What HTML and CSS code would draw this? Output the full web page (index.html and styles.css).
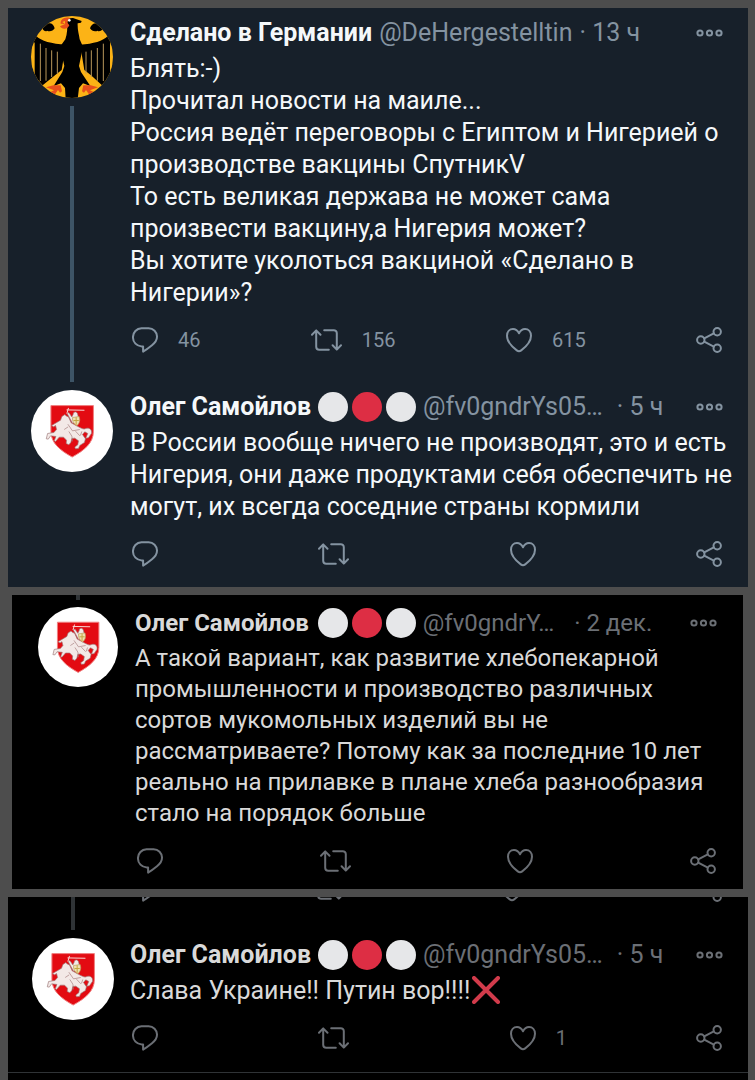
FILE: index.html
```
<!DOCTYPE html>
<html lang="ru">
<head>
    <meta charset="UTF-8">
    <meta name="viewport" content="width=device-width, initial-scale=1">
    <title>Твиты</title>
    <link rel="stylesheet" href="styles.css">
</head>
<body>
<!-- icons -->
<svg class="sprite" aria-hidden="true">
    <symbol id="reply" viewBox="0 0 26 28">
        <path d="M9.500 2.200h7a8.400 8.400 0 0 1 8.500 8.600c0 3.600-1.900 6-5 8.500-2.900 2.400-5.400 4.300-8.900 6.300v-5.200H9.700A8.800 8.800 0 0 1 1 11.300a8.800 8.800 0 0 1 8.500-9.100z"/>
    </symbol>
    <symbol id="retweet" viewBox="0 0 31 28">
        <path d="M5.200 4.500v16.300a3 3 0 0 0 3 3h9.600M1 8.700l4.200-4.300 4.300 4.300M13.200 4.200h9.600a3 3 0 0 1 3 3v16.300M21.600 19.300l4.200 4.300 4.200-4.300"/>
    </symbol>
    <symbol id="heart" viewBox="0 0 26 28">
        <path d="M13 7.300C11.500 4.300 9.300 3 7 3 3.500 3 1 5.800 1 9.700c0 6 5 11 9.800 14.700 1.600 1.200 2.800 1.200 4.400 0C20 20.700 25 15.700 25 9.700 25 5.800 22.500 3 19 3c-2.300 0-4.500 1.300-6 4.300z"/>
    </symbol>
    <symbol id="share" viewBox="0 0 26 28">
        <circle cx="4.800" cy="14" r="3.700"/>
        <circle cx="21.200" cy="5.700" r="3.700"/>
        <circle cx="21.200" cy="22.300" r="3.700"/>
        <path d="M8.200 12.300l9.600-4.900M8.200 15.700l9.600 4.900"/>
    </symbol>
    <symbol id="more" viewBox="0 0 27 8">
        <circle cx="4" cy="4" r="2.600"/>
        <circle cx="13.500" cy="4" r="2.600"/>
        <circle cx="23" cy="4" r="2.600"/>
    </symbol>
    <symbol id="cross" viewBox="0 0 28 28">
        <path d="M2 2l24 24M26 2L2 26"/>
    </symbol>
    <symbol id="eagle" viewBox="3 3 246 246">
        <path fill="#fcb316" d="M0 0h252v252H0z"/>
        <!-- wings -->
        <path d="M18 62c16 16 46 24 90 27l-5 28-8 48-20 16-37 30-28-30V80zM234 62c-16 16-42 24-84 27l5 28 8 48 20 16 33 30 28-30V80z"/>
        <path d="M38 42c2-10 12-18 22-17 8 1 12 8 14 15-5 9-16 11-23 7-3 4-9 1-13-5zM218 42c-2-10-12-18-22-17-8 1-14 8-16 15 5 9 16 11 23 7 3 4 11 1 15-5z"/>
        <path fill="#fcb316" d="M6 90l8-8v108l-8-12zM246 90l-6-8v108l6-12zM96 170l8-42 6 38-6 16zM158 170l-9-42-6 38 6 16z"/>
        <path fill="none" stroke="#b9975b" stroke-width="3" d="M31 86v112M48 99v98M65 106v80M82 110v66M220 86v112M202 99v98M184 106v80M168 110v66"/>
        <!-- body and tail -->
        <path d="M112 24c-1-11 7-16 17-15l26 9-2 5-10 2c-1 20 4 32 6 48l10 22-12 58 6 18 28 42-22-8-12 14-4 33h-36l-2-33-12-14-22 8 26-42 6-18-13-58 16-22c6-18 6-34 6-49z"/>
        <path fill="#e8501c" d="M120 9c-16-5-30 5-28 17l13 1-15 7c4 10 23 11 28-3l-6-8c0-6 3-10 8-14z"/>
        <path fill="#fcb316" d="M97 21l8-3v9z"/>
        <path fill="#e8501c" d="M70 211l22 0 4 18-6 4-6-8-10 14-24-3 22-10-24-9zM182 211l-22 0-4 18 6 4 6-8 10 14 24-3-22-10 24-9z"/>
        <circle cx="118" cy="16" r="4" fill="#fff"/>
    </symbol>
    <symbol id="pahonia" viewBox="17 15 247 247">
        <path fill="#fff" d="M0 0h300v300H0z"/>
        <path fill="#e30b12" stroke="#f08080" stroke-width="3" d="M77 62h128v78c0 35-28 57-64 77-36-20-64-42-64-77z"/>
        <path fill="#f3e9e7" stroke="#9b7676" stroke-width="2" d="M106 106l4-11 9-6 4 4 7 3 8 18 26 14c8 4 13 6 18 3 10-4 20 3 17 15l-9 13-8 1 6-14-9-5-7 8 9 13-3 11-14 9-4 9-9 1-2-5 9-7 2-12-11-8-9 1-3 12-6 7-8-4 1-10-9-9-13 0-11 13-4-2 5-13-16-2-7 10-6-1 4-16 19-3 8-9-3-12-6 4-6-4z"/>
        <path fill="#f3e9e7" stroke="#9b7676" stroke-width="2" d="M144 88c0-8 10-10 13-2l3 12-4 14-14 3-7-13-9-16 5-3 9 13z"/>
        <path fill="none" stroke="#f8d9d6" stroke-width="3" d="M124 75l54 1M125 86l5-17"/>
        <path fill="#f0dfb0" stroke="#b79c57" stroke-width="2" d="M142 98l20-3c4 12 1 21-7 28-9-5-14-13-13-25z"/>
        <path fill="none" stroke="#c2a63e" stroke-width="3" d="M153 97v23M145 107h16"/>
        <path fill="none" stroke="#a47b7b" stroke-width="2" d="M128 118l14 20 22-4M131 140l9 14 2 16M151 139l13 14M117 134l12-8M170 140l-4 12"/>
    </symbol>
</svg>

<main class="feed">
    <section class="panel dim">
        <article class="tweet">
            <div class="side">
                <svg class="avatar" role="img" aria-label="Сделано в Германии"><use href="#eagle"/></svg>
                <span class="thread"></span>
            </div>
            <div class="content">
                <header>
                    <a href="#" class="name">Сделано в Германии</a>
                    <a href="#" class="handle">@DeHergestelltin</a>
                    <span class="time">· 13 ч</span>
                    <button type="button" class="more" aria-label="Ещё"><svg><use href="#more"/></svg></button>
                </header>
                <p>Блять:-)<br>Прочитал новости на маиле...<br>Россия ведёт переговоры с Египтом и Нигерией о<br>производстве вакцины СпутникV<br>То есть великая держава не может сама<br>произвести вакцину,а Нигерия может?<br>Вы хотите уколоться вакциной «Сделано в<br>Нигерии»?</p>
                <div class="actions">
                    <button type="button" aria-label="Ответить, 46"><svg><use href="#reply"/></svg><span>46</span></button>
                    <button type="button" aria-label="Ретвитнуть, 156"><svg class="wide"><use href="#retweet"/></svg><span>156</span></button>
                    <button type="button" aria-label="Нравится, 615"><svg><use href="#heart"/></svg><span>615</span></button>
                    <button type="button" aria-label="Поделиться"><svg><use href="#share"/></svg></button>
                </div>
            </div>
        </article>
        <article class="tweet last">
            <div class="side">
                <svg class="avatar" role="img" aria-label="Олег Самойлов"><use href="#pahonia"/></svg>
            </div>
            <div class="content">
                <header>
                    <a href="#" class="name">Олег Самойлов</a>
                    <span class="balls"><i></i><i class="red"></i><i></i></span>
                    <a href="#" class="handle">@fv0gndrYs05…</a>
                    <span class="time cut">· 5 ч</span>
                    <button type="button" class="more" aria-label="Ещё"><svg><use href="#more"/></svg></button>
                </header>
                <p>В России вообще ничего не производят, это и есть<br>Нигерия, они даже продуктами себя обеспечить не<br>могут, их всегда соседние страны кормили</p>
                <div class="actions">
                    <button type="button" aria-label="Ответить"><svg><use href="#reply"/></svg></button>
                    <button type="button" aria-label="Ретвитнуть"><svg class="wide"><use href="#retweet"/></svg></button>
                    <button type="button" aria-label="Нравится"><svg><use href="#heart"/></svg></button>
                    <button type="button" aria-label="Поделиться"><svg><use href="#share"/></svg></button>
                </div>
            </div>
        </article>
    </section>

    <section class="panel dark small">
        <div class="stub"><span class="thread"></span></div>
        <article class="tweet last">
            <div class="side">
                <svg class="avatar" role="img" aria-label="Олег Самойлов"><use href="#pahonia"/></svg>
            </div>
            <div class="content">
                <header>
                    <a href="#" class="name">Олег Самойлов</a>
                    <span class="balls"><i></i><i class="red"></i><i></i></span>
                    <a href="#" class="handle">@fv0gndrY…</a>
                    <span class="time cut">· 2 дек.</span>
                    <button type="button" class="more" aria-label="Ещё"><svg><use href="#more"/></svg></button>
                </header>
                <p>А такой вариант, как развитие хлебопекарной<br>промышленности и производство различных<br>сортов мукомольных изделий вы не<br>рассматриваете? Потому как за последние 10 лет<br>реально на прилавке в плане хлеба разнообразия<br>стало на порядок больше</p>
                <div class="actions">
                    <button type="button" aria-label="Ответить"><svg><use href="#reply"/></svg></button>
                    <button type="button" aria-label="Ретвитнуть"><svg class="wide"><use href="#retweet"/></svg></button>
                    <button type="button" aria-label="Нравится"><svg><use href="#heart"/></svg></button>
                    <button type="button" aria-label="Поделиться"><svg><use href="#share"/></svg></button>
                </div>
            </div>
        </article>
    </section>

    <section class="panel dark bottom">
        <!-- tail of the previous tweet -->
        <div class="tweet peek">
            <div class="side"><span class="thread"></span></div>
            <div class="content">
                <div class="actions">
                    <button type="button" aria-label="Ответить"><svg><use href="#reply"/></svg></button>
                    <button type="button" aria-label="Ретвитнуть"><svg class="wide"><use href="#retweet"/></svg></button>
                    <button type="button" class="liked" aria-label="Нравится"><svg><use href="#heart"/></svg></button>
                    <button type="button" aria-label="Поделиться"><svg><use href="#share"/></svg></button>
                </div>
            </div>
        </div>
        <article class="tweet last">
            <div class="side">
                <svg class="avatar" role="img" aria-label="Олег Самойлов"><use href="#pahonia"/></svg>
            </div>
            <div class="content">
                <header>
                    <a href="#" class="name">Олег Самойлов</a>
                    <span class="balls"><i></i><i class="red"></i><i></i></span>
                    <a href="#" class="handle">@fv0gndrYs05…</a>
                    <span class="time cut">· 5 ч</span>
                    <button type="button" class="more" aria-label="Ещё"><svg><use href="#more"/></svg></button>
                </header>
                <p>Слава Украине!! Путин вор!!!!<svg class="cross" role="img" aria-label="крестик"><use href="#cross"/></svg></p>
                <div class="actions">
                    <button type="button" aria-label="Ответить"><svg><use href="#reply"/></svg></button>
                    <button type="button" aria-label="Ретвитнуть"><svg class="wide"><use href="#retweet"/></svg></button>
                    <button type="button" class="single" aria-label="Нравится, 1"><svg><use href="#heart"/></svg><span>1</span></button>
                    <button type="button" aria-label="Поделиться"><svg><use href="#share"/></svg></button>
                </div>
            </div>
        </article>
    </section>
</main>
</body>
</html>
```
FILE: styles.css
```
*{margin:0;padding:0;box-sizing:border-box;}

body{background:#4d4d4d;font-family:Roboto,"Noto Sans",sans-serif;font-size:25px;line-height:32px;}
a{text-decoration:none;color:inherit;}
button{border:0;background:none;font:inherit;color:inherit;cursor:pointer;}
.sprite{position:absolute;width:0;height:0;}

.feed{display:flex;flex-direction:column;gap:8px;padding:8px 7px 0 8px;}
.panel{overflow:hidden;}
.dim{background:#17202a;color:#f5f8fa;--muted:#8493a1;--line:#3d5466;}
.dark{background:#000;color:#d9d9d9;--muted:#6b6f75;--line:#2f3336;}
.small{margin:0 5px 0 4px;font-size:24px;line-height:31px;}

.tweet{display:flex;gap:17px;padding:8px 25px 0 23px;}
.side{display:flex;flex-direction:column;align-items:center;flex:none;width:82px;}
.avatar{display:block;width:82px;height:82px;border-radius:50%;}
.thread{flex:1;width:4px;margin-top:8px;background:var(--line);}
.content{flex:1;min-width:0;padding-bottom:28px;}
.last .content{padding-bottom:19px;}

header{display:flex;align-items:center;height:34px;margin-bottom:3px;white-space:nowrap;}
.name{font-weight:700;}
.handle{margin-left:7px;color:var(--muted);}
.time{margin-left:7px;color:var(--muted);}
.time.cut{margin-left:14px;}
.more{margin-left:auto;height:8px;line-height:0;color:var(--muted);}
.more svg{width:27px;height:8px;fill:none;stroke:currentColor;stroke-width:2;}

.balls{display:flex;gap:4px;margin-left:7px;}
.balls i{width:30px;height:30px;border-radius:50%;background:#e6e7e9;}
.balls .red{background:#dd2e44;}

p{white-space:nowrap;}
.cross{width:28px;height:28px;margin-left:2px;vertical-align:-5px;fill:none;stroke:#d23b4b;stroke-width:4;stroke-linecap:round;}

.actions{display:flex;justify-content:space-between;margin-top:17px;padding:0 1px 0 2px;color:var(--muted);font-size:20px;line-height:28px;}
.actions button{display:flex;align-items:center;gap:20px;height:28px;}
.actions svg{width:26px;height:28px;fill:none;stroke:currentColor;stroke-width:2;stroke-linecap:round;stroke-linejoin:round;}
.actions .wide{width:31px;}
.single span{width:0;margin-right:-20px;}

/* middle panel */
.small .stub{display:flex;justify-content:center;width:80px;height:5px;margin-left:26px;}
.small .stub .thread{flex:none;height:5px;margin:0;}
.small .tweet{padding:7px 26px 0;}
.small .side,.small .avatar{width:80px;}
.small .avatar{height:80px;}
.small header{height:32px;margin-bottom:4px;}
.small .balls{margin-left:9px;}
.small .time.cut{margin-left:20px;}
.small .actions{margin-top:18px;}
.small .content{padding-bottom:14px;}

/* bottom panel */
.bottom .tweet{padding-left:24px;gap:16px;}
.bottom .peek{height:33px;padding-top:0;overflow:hidden;}
.peek .thread{margin:0;}
.peek .content{padding:0;}
.peek .actions{margin-top:-22px;}
.peek .liked{margin-right:16px;}
.bottom .last{border-bottom:1px solid #2f3336;}
.bottom .last .content{padding-bottom:20px;}
.bottom{padding-bottom:7px;}
```
